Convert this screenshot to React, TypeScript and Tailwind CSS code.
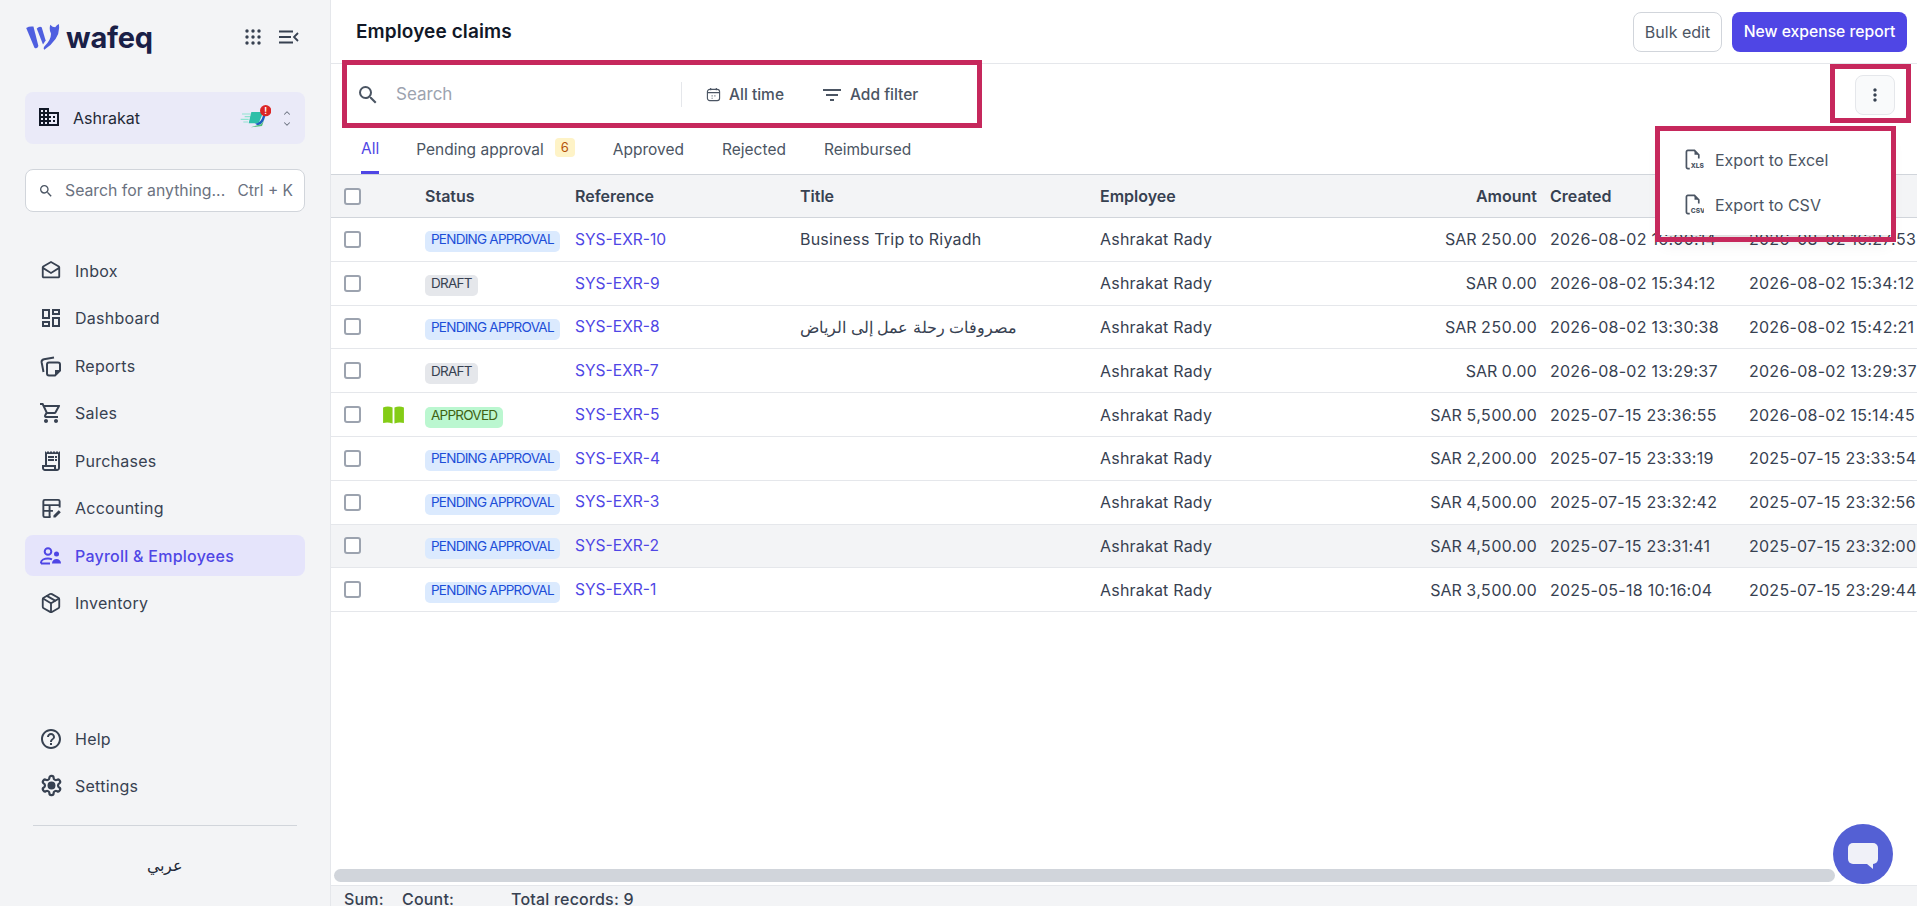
import {
  MdOutlineDrafts,
  MdOutlineDashboard,
  MdOutlineShoppingCart,
  MdOutlineReceiptLong,
  MdHelpOutline,
  MdDomain,
  MdSearch,
  MdMoreVert,
  MdFilterList,
} from "react-icons/md";
import { LuChevronUp, LuChevronDown, LuPackage, LuSettings } from "react-icons/lu";

const font = "font-['Inter','Noto_Sans',sans-serif]";

function ReportsIcon({ className }: { className?: string }) {
  return (
    <svg viewBox="0 0 24 24" className={className} fill="none" stroke="currentColor" strokeWidth="2">
      <path d="M4.500 18 2.600 8.200Q2.300 5.800 5 5.200L15 3.500" />
      <path d="M10 8.500h9a2 2 0 0 1 2 2v6l-5 5h-6a2 2 0 0 1-2-2v-9a2 2 0 0 1 2-2z" />
      <path d="M21 16h-5v5.500z" fill="currentColor" stroke="none" />
    </svg>
  );
}

function AccountingIcon({ className }: { className?: string }) {
  return (
    <svg viewBox="0 0 24 24" className={className} fill="none" stroke="currentColor" strokeWidth="2">
      <path d="M11 21H5a1.500 1.500 0 0 1-1.500-1.500v-15A1.500 1.500 0 0 1 5 3h14a1.500 1.500 0 0 1 1.500 1.500V11" />
      <path d="M3.500 8.500h17M3.500 14.500h10M10 8.500V21" />
      <path d="M14 21.500v-2.200l5.500-5.500 2.200 2.200-5.500 5.500z" fill="currentColor" stroke="none" />
    </svg>
  );
}

function PeopleIcon({ className }: { className?: string }) {
  return (
    <svg viewBox="0 0 24 24" className={className} fill="none" stroke="currentColor" strokeWidth="2">
      <circle cx="9" cy="7.500" r="3.300" />
      <path d="M2 19.500v-1c0-2.500 3.500-4 7-4 1.500 0 2.800.3 4 .8M2 19.500h9" />
      <circle cx="17.500" cy="10" r="2.500" fill="currentColor" stroke="none" />
      <path d="M13 19.500c0-3 2-4.500 4.500-4.500s4.500 1.500 4.500 4.500z" fill="currentColor" stroke="none" />
    </svg>
  );
}

function GearIcon({ className }: { className?: string }) {
  return (
    <span className={`relative flex items-center justify-center ${className ?? ""}`}>
      <LuSettings className="size-full" strokeWidth={2.3} />
      <span className="absolute size-[7px] rounded-full bg-current" />
    </span>
  );
}

function FileBadgeIcon({ label }: { label: string }) {
  return (
    <svg viewBox="0 0 20 22" className="h-[21px] w-[19px] shrink-0 text-[#4b5563]" fill="none" stroke="currentColor" strokeWidth="1.800">
      <path d="M5 20.500H3a1.500 1.500 0 0 1-1.500-1.500V3A1.500 1.500 0 0 1 3 1.500h7l4.500 4.500v4" />
      <path d="M10 1.500v4.500h4.500z" fill="currentColor" stroke="none" />
      <text x="6" y="20" fontSize="7" fontWeight="800" fill="currentColor" stroke="none" fontFamily="Inter">
        {label}
      </text>
    </svg>
  );
}

const mainNav = [
  { label: "Inbox", Icon: MdOutlineDrafts, iconSize: "size-[22px]" },
  { label: "Dashboard", Icon: MdOutlineDashboard, iconSize: "size-[24px]" },
  { label: "Reports", Icon: ReportsIcon, iconSize: "size-[24px]" },
  { label: "Sales", Icon: MdOutlineShoppingCart, iconSize: "size-[24px]" },
  { label: "Purchases", Icon: MdOutlineReceiptLong, iconSize: "size-[24px]" },
  { label: "Accounting", Icon: AccountingIcon, iconSize: "size-[23px]" },
  { label: "Payroll & Employees", Icon: PeopleIcon, iconSize: "size-[24px]", active: true },
  { label: "Inventory", Icon: LuPackage, iconSize: "size-[22px]" },
];

const bottomNav = [
  { label: "Help", Icon: MdHelpOutline, iconSize: "size-[24px]" },
  { label: "Settings", Icon: GearIcon, iconSize: "size-[23px]" },
];

const statusStyles: Record<string, string> = {
  "PENDING APPROVAL": "bg-[#dbeafe] text-[#1d4ed8]",
  DRAFT: "bg-[#e5e7eb] text-[#374151]",
  APPROVED: "bg-[#bbf7d0] text-[#3f6212]",
};

const rows = [
  { status: "PENDING APPROVAL", ref: "SYS-EXR-10", title: "Business Trip to Riyadh", amount: "SAR 250.00", created: "2026-08-02 16:00:14", updated: "2026-08-02 16:27:53" },
  { status: "DRAFT", ref: "SYS-EXR-9", title: "", amount: "SAR 0.00", created: "2026-08-02 15:34:12", updated: "2026-08-02 15:34:12" },
  { status: "PENDING APPROVAL", ref: "SYS-EXR-8", title: "مصروفات رحلة عمل إلى الرياض", arabic: true, amount: "SAR 250.00", created: "2026-08-02 13:30:38", updated: "2026-08-02 15:42:21" },
  { status: "DRAFT", ref: "SYS-EXR-7", title: "", amount: "SAR 0.00", created: "2026-08-02 13:29:37", updated: "2026-08-02 13:29:37" },
  { status: "APPROVED", ref: "SYS-EXR-5", title: "", amount: "SAR 5,500.00", created: "2025-07-15 23:36:55", updated: "2026-08-02 15:14:45", book: true },
  { status: "PENDING APPROVAL", ref: "SYS-EXR-4", title: "", amount: "SAR 2,200.00", created: "2025-07-15 23:33:19", updated: "2025-07-15 23:33:54" },
  { status: "PENDING APPROVAL", ref: "SYS-EXR-3", title: "", amount: "SAR 4,500.00", created: "2025-07-15 23:32:42", updated: "2025-07-15 23:32:56" },
  { status: "PENDING APPROVAL", ref: "SYS-EXR-2", title: "", amount: "SAR 4,500.00", created: "2025-07-15 23:31:41", updated: "2025-07-15 23:32:00", hover: true },
  { status: "PENDING APPROVAL", ref: "SYS-EXR-1", title: "", amount: "SAR 3,500.00", created: "2025-05-18 10:16:04", updated: "2025-07-15 23:29:44" },
];

const gridCols = "grid grid-cols-[44px_50px_150px_225px_300px_250px_200px_199px_200px] items-center";

function Checkbox() {
  return <span className="ml-[13px] block size-[17px] rounded-[3px] border-2 border-[#9ca3af] bg-white" />;
}

function Sidebar() {
  return (
    <aside className="flex h-full w-[331px] shrink-0 flex-col border-r border-[#e5e7eb] bg-[#f3f4f6] px-[25px]">
      {/* Logo */}
      <div className="flex h-[76px] items-center justify-between pb-[2px]">
        <div className="flex items-center gap-[5px]">
          <svg viewBox="12 15 108 85" className="h-[28px] w-[36px]" fill="#4f5fe0">
            <path d="M15 30Q25 24 37 26L52 85Q48 95 40 90Z" />
            <path d="M47 32Q55 24 62 28L74 68 66 80Z" />
            <path d="M88 20Q95 28 103 28 108 20 114 18 122 60 70 96 66 92 70 86 92 66 90 46 84 36 88 20Z" />
          </svg>
          <span className="text-[29px] leading-none font-bold tracking-[-0.2px] text-[#1a2047]">wafeq</span>
        </div>
        <div className="mr-[6px] flex items-center gap-[18px] text-[#374151]">
          <svg viewBox="0 0 16 16" className="size-[16px]" fill="currentColor">
            {[2, 8, 14].map((y) =>
              [2, 8, 14].map((x) => <circle key={`${x}-${y}`} cx={x} cy={y} r="1.700" />),
            )}
          </svg>
          <svg viewBox="0 0 20 14" className="h-[14px] w-[20px]" fill="none" stroke="currentColor" strokeWidth="1.800">
            <path d="M0 1.500h14M0 7h12M0 12.500h14M19 3l-4 4 4 4" />
          </svg>
        </div>
      </div>

      {/* Company */}
      <div className="mt-[16px] flex h-[52px] items-center rounded-lg bg-[#eaeaf8] pr-[13px] pl-[12px]">
        <MdDomain className="mb-[3px] size-[24px] text-[#111827]" />
        <span className="ml-[12px] text-[16px] text-[#1f2937]">Ashrakat</span>
        <svg viewBox="15 6 96 78" className="mb-[6px] ml-auto h-[26px] w-[32px]">
          <path d="M24 42h26M32 50h18M20 58h24M28 66h14" stroke="#8fe3cf" strokeWidth="3.500" />
          <path d="M52 36h36L74 70H44z" fill="#2dbfa8" />
          <path d="M62 70q18 2 26-26l6 4q-6 26-24 28z" fill="#1d5fc0" />
          <path d="M50 82l34-4 10-28q-6 24-24 26z" fill="#4fbf7a" />
          <circle cx="95" cy="32" r="17" fill="#dc2626" />
          <text x="95" y="41" textAnchor="middle" fontSize="25" fontWeight="700" fill="#fff" fontFamily="Inter">
            !
          </text>
        </svg>
        <div className="ml-[11px] flex flex-col text-[#6b7280]">
          <LuChevronUp className="size-[10px]" strokeWidth={2.500} />
          <LuChevronDown className="mt-[1px] size-[10px]" strokeWidth={2.500} />
        </div>
      </div>

      {/* Search */}
      <div className="mt-[25px] flex h-[43px] items-center rounded-lg border border-[#d1d5db] bg-white pr-[11px] pl-[12px]">
        <MdSearch className="size-[16px] text-[#4b5563]" />
        <span className="ml-[11px] text-[15.800px] text-[#6b7280]">Search for anything...</span>
        <span className="ml-auto text-[15.500px] text-[#6b7280]">Ctrl + K</span>
      </div>

      {/* Main navigation */}
      <nav className="mt-[38px] flex flex-col gap-[6.500px]">
        {mainNav.map(({ label, Icon, iconSize, active }) => (
          <a
            key={label}
            className={`flex h-[41px] items-center gap-[12px] rounded-lg px-[14px] text-[16px] tracking-[0.25px] ${
              active ? "bg-[#e5e4fb] font-medium text-[#4f46e5]" : "text-[#374151]"
            }`}
          >
            <span className="flex size-[24px] shrink-0 items-center justify-center">
              <Icon className={iconSize} />
            </span>
            {label}
          </a>
        ))}
      </nav>

      {/* Help, settings and language */}
      <nav className="mt-auto flex flex-col gap-[6px]">
        {bottomNav.map(({ label, Icon, iconSize }) => (
          <a key={label} className="flex h-[41px] items-center gap-[12px] px-[14px] text-[16px] tracking-[0.25px] text-[#374151]">
            <span className="flex size-[24px] shrink-0 items-center justify-center">
              <Icon className={iconSize} />
            </span>
            {label}
          </a>
        ))}
      </nav>
      <div className="mx-[8px] mt-[19px] border-t border-[#d1d5db]" />
      <div className="flex h-[80px] items-center justify-center pb-[3px] text-[16px] text-[#1f2937]">عربي</div>
    </aside>
  );
}

function ExportMenu() {
  return (
    <div className="absolute top-[130px] right-[26px] z-10 flex w-[231px] flex-col bg-white pt-[7px] pb-[8px] shadow-lg">
      <div className="flex h-[45px] items-center gap-[11px] pl-[25px] text-[16px] text-[#4b5563]">
        <FileBadgeIcon label="XLS" />
        Export to Excel
      </div>
      <div className="flex h-[45px] items-center gap-[11px] pl-[25px] text-[16px] text-[#4b5563]">
        <FileBadgeIcon label="CSV" />
        Export to CSV
      </div>
    </div>
  );
}

export default function App() {
  return (
    <div className={`relative flex h-[906px] w-[1917px] overflow-hidden bg-white ${font}`}>
      <Sidebar />

      <main className="flex min-w-0 flex-1 flex-col">
        {/* Title bar */}
        <header className="flex h-[64px] shrink-0 items-center justify-between border-b border-[#e5e7eb] pr-[10px] pl-[25px]">
          <h1 className="mt-[2px] text-[19px] font-semibold tracking-[0.1px] text-[#111827]">Employee claims</h1>
          <div className="flex items-center gap-[10px]">
            <button className="h-[40px] w-[89px] rounded-lg border border-[#d1d5db] bg-white text-[16px] text-[#4b5563]">
              Bulk edit
            </button>
            <button className="h-[40px] w-[175px] rounded-lg bg-[#4f46e5] text-[15.700px] font-medium text-white">
              New expense report
            </button>
          </div>
        </header>

        {/* Search and filters */}
        <div className="flex h-[63px] shrink-0 items-center pr-[22px] pb-[2px] pl-[25px]">
          <MdSearch className="size-[24px] text-[#4b5563]" />
          <span className="ml-[16px] w-[285px] text-[17px] text-[#9ca3af]">Search</span>
          <span className="h-[25px] border-l border-[#e5e7eb]" />
          <svg viewBox="0 0 16 16" className="ml-[24px] size-[15px] text-[#4b5563]" fill="none" stroke="currentColor" strokeWidth="1.200">
            <rect x="1.500" y="2.500" width="13" height="12" rx="2.500" />
            <path d="M1.500 6h13M5 1v2.500M11 1v2.500M6 9.500h1M9 9.500h1M6 12h1" />
          </svg>
          <span className="ml-[8px] text-[15.500px] font-medium text-[#4b5563]">All time</span>
          <MdFilterList className="ml-[36px] size-[24px] text-[#4b5563]" />
          <span className="ml-[6px] text-[15.500px] font-medium text-[#4b5563]">Add filter</span>
          <button className="ml-auto flex size-[40px] items-center justify-center rounded-lg border border-[#e5e7eb] bg-[#f9fafb] text-[#374151]">
            <MdMoreVert className="size-[20px]" />
          </button>
        </div>

        {/* Tabs */}
        <div className="flex h-[47px] shrink-0 items-start gap-[38px] pl-[30px] text-[15.500px] text-[#4b5563]">
          <span className="-mr-[1px] flex h-[47px] items-center border-b-[3px] border-[#4f46e5] pb-[1px] text-[#4f46e5]">All</span>
          <span className="flex h-[46px] items-center gap-[11px]">
            Pending approval
            <span className="mb-[5px] flex h-[19px] w-[20px] items-center justify-center rounded bg-[#fef3c7] text-[13px] text-[#b45309]">
              6
            </span>
          </span>
          <span className="flex h-[46px] items-center">Approved</span>
          <span className="flex h-[46px] items-center">Rejected</span>
          <span className="flex h-[46px] items-center">Reimbursed</span>
        </div>

        {/* Claims table */}
        <div className="flex-1 overflow-hidden">
          <div className={`${gridCols} h-[44px] border-y border-[#d1d5db] bg-[#f3f4f6] text-[16px] font-semibold text-[#374151]`}>
            <Checkbox />
            <span />
            <span>Status</span>
            <span>Reference</span>
            <span>Title</span>
            <span>Employee</span>
            <span className="pr-[13px] text-right">Amount</span>
            <span>Created</span>
            <span>Updated</span>
          </div>
          {rows.map((row) => (
            <div
              key={row.ref}
              className={`${gridCols} h-[43.800px] border-b border-[#e5e7eb] text-[16px] text-[#374151] ${row.hover ? "bg-[#f3f4f6]" : ""}`}
            >
              <Checkbox />
              <span className="pl-[7px]">
                {row.book && (
                  <svg viewBox="0 0 24 19" className="h-[18px] w-[23px] text-[#84cc16]" fill="currentColor">
                    <path d="M1 1.500Q6-.5 11 1.500V18.500Q6 16.500 1 18z" />
                    <path d="M13 1.500Q18-.5 23 1.500V18Q18 16.500 13 18.500z" />
                  </svg>
                )}
              </span>
              <span>
                <span className={`inline-block rounded-[5px] px-[6px] pb-[4px] text-[13.500px] leading-[17px] tracking-[-0.75px] ${statusStyles[row.status]}`}>
                  {row.status}
                </span>
              </span>
              <span className="text-[15.600px] text-[#4f46e5]">{row.ref}</span>
              <span className={row.arabic ? "text-[16.400px]" : "tracking-[0.2px]"}>{row.title}</span>
              <span className="tracking-[0.2px]">Ashrakat Rady</span>
              <span className="pr-[13px] text-right whitespace-nowrap tabular-nums">{row.amount}</span>
              <span className="tracking-[0.26px] whitespace-nowrap">{row.created}</span>
              <span className="tracking-[0.26px] whitespace-nowrap">{row.updated}</span>
            </div>
          ))}
        </div>

        {/* Horizontal scroll bar */}
        <div className="flex h-[17px] shrink-0 items-start pt-[1px] pl-[3px]">
          <div className="h-[13px] w-[1501px] rounded-full bg-[#d1d5db]" />
        </div>

        {/* Totals */}
        <footer className="flex h-[21px] shrink-0 items-start border-t border-[#e5e7eb] bg-[#f3f4f6] pl-[13px] text-[16px] leading-[26px] font-medium tracking-[0.2px] text-[#374151]">
          <span className="w-[58px]">Sum:</span>
          <span className="w-[109px]">Count:</span>
          <span>Total records: 9</span>
        </footer>
      </main>

      <ExportMenu />

      {/* Chat launcher */}
      <button className="absolute top-[824px] left-[1833px] z-10 flex size-[60px] items-center justify-center rounded-full bg-[#5460d4]">
        <svg viewBox="0 0 30 26" className="mt-[4px] h-[26px] w-[30px]">
          <rect width="30" height="21" rx="5" fill="#f0f1f8" />
          <path d="M19 21h6v5z" fill="#f0f1f8" />
        </svg>
      </button>

      {/* Review annotations */}
      <div className="pointer-events-none absolute top-[60px] left-[342px] z-20 h-[68px] w-[640px] border-[5px] border-[#c6285c]" />
      <div className="pointer-events-none absolute top-[64px] left-[1830px] z-20 h-[59px] w-[81px] border-[5px] border-[#c6285c]" />
      <div className="pointer-events-none absolute top-[126px] left-[1655px] z-20 h-[116px] w-[241px] border-[5px] border-[#c6285c]" />
    </div>
  );
}
